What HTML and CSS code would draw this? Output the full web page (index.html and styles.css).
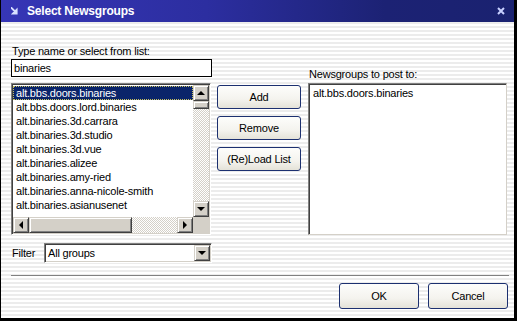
FILE: index.html
```html
<!DOCTYPE html>
<html lang="en">
<head>
    <meta charset="UTF-8">
    <title>Select Newsgroups</title>
    <link rel="stylesheet" href="styles.css">
</head>
<body>
    <div class="window">
        <div class="titlebar">
            <svg class="title-icon" width="8" height="8" viewBox="0 0 8 8">
                <path d="M0 0 L6 6 M0 1 L5 6 M6 2 L6 7 L1 7 Z" stroke="#d8e0ff" stroke-width="1.2" fill="#d8e0ff"/>
            </svg>
            <span class="title-text">Select Newsgroups</span>
            <svg class="close" width="8" height="8" viewBox="0 0 8 8">
                <path d="M1 1 L7 7 M7 1 L1 7" stroke="#c8d0ff" stroke-width="2"/>
            </svg>
        </div>

        <div class="content">
            <div class="main">
                <div class="col-left">
                    <div class="label">Type name or select from list:</div>
                    <div class="textbox">binaries</div>

                    <div class="listbox">
                        <div class="items">
                            <div class="item selected">alt.bbs.doors.binaries</div>
                            <div class="item">alt.bbs.doors.lord.binaries</div>
                            <div class="item">alt.binaries.3d.carrara</div>
                            <div class="item">alt.binaries.3d.studio</div>
                            <div class="item">alt.binaries.3d.vue</div>
                            <div class="item">alt.binaries.alizee</div>
                            <div class="item">alt.binaries.amy-ried</div>
                            <div class="item">alt.binaries.anna-nicole-smith</div>
                            <div class="item">alt.binaries.asianusenet</div>
                        </div>
                        <div class="vscroll">
                            <div class="sb-btn"><span class="arrow up"></span></div>
                            <div class="sb-thumb v"></div>
                            <div class="sb-track"></div>
                            <div class="sb-btn"><span class="arrow down"></span></div>
                        </div>
                        <div class="hscroll">
                            <div class="sb-btn"><span class="arrow left"></span></div>
                            <div class="sb-thumb h"></div>
                            <div class="sb-track"></div>
                            <div class="sb-btn"><span class="arrow right"></span></div>
                        </div>
                        <div class="corner"></div>
                    </div>

                    <div class="filter-row">
                        <span class="filter-label">Filter</span>
                        <div class="combo">
                            <span class="combo-value">All groups</span>
                            <div class="sb-btn"><span class="arrow down"></span></div>
                        </div>
                    </div>
                </div>

                <div class="col-mid">
                    <button class="btn">Add</button>
                    <button class="btn">Remove</button>
                    <button class="btn">(Re)Load List</button>
                </div>

                <div class="col-right">
                    <div class="label">Newsgroups to post to:</div>
                    <div class="postbox">
                        <div class="post-item">alt.bbs.doors.binaries</div>
                    </div>
                </div>
            </div>

            <div class="separator"></div>

            <div class="footer">
                <button class="btn btn-wide">OK</button>
                <button class="btn btn-wide">Cancel</button>
            </div>
        </div>
    </div>
</body>
</html>
```

FILE: styles.css
```css
body {
    margin: 0;
    padding: 0;
    font-family: "Liberation Sans", Arial, sans-serif;
    font-size: 11px;
    letter-spacing: -0.2px;
    color: #000;
    background: #000;
}
.window {
    box-sizing: border-box;
    width: 517px;
    height: 321px;
    border-left: 1px solid #000;
    border-right: 3px solid #000;
    border-bottom: 3px solid #000;
    background: repeating-linear-gradient(to bottom, #fff 0, #fff 2px, #ececec 2px, #ececec 4px);
    display: flex;
    flex-direction: column;
}
.titlebar {
    height: 22px;
    flex: none;
    display: flex;
    align-items: center;
    background: linear-gradient(to right, #3636b6 0%, #2c2ea0 40%, #1c2274 75%, #1a2270 100%);
    color: #fff;
}
.title-icon {
    margin-left: 10px;
    margin-right: 8px;
}
.title-text {
    font-weight: bold;
    font-size: 12px;
    letter-spacing: -0.2px;
    transform: scaleY(1.1);
}
.close {
    margin-left: auto;
    margin-right: 9px;
}
.content {
    flex: 1;
    display: flex;
    flex-direction: column;
    padding: 22px 0 0 10px;
}
.main {
    display: flex;
    align-items: flex-start;
}
.label {
    height: 14px;
    line-height: 14px;
    padding-left: 1px;
}
.col-left {
    width: 201px;
    display: flex;
    flex-direction: column;
}
.col-left .label {
    margin-bottom: 1px;
}
.textbox {
    box-sizing: border-box;
    height: 18px;
    border: 1px solid #000;
    background: #fff;
    padding-left: 2px;
    line-height: 16px;
}
.listbox {
    box-sizing: border-box;
    margin-top: 6px;
    height: 152px;
    width: 200px;
    border: 1px solid;
    border-color: #808080 #fff #fff #808080;
    box-shadow: inset 1px 1px 0 #404040, inset -1px -1px 0 #d4d0c8;
    padding: 1px;
    background: #fff;
    display: grid;
    grid-template-columns: 1fr 16px;
    grid-template-rows: 1fr 16px;
}
.items {
    overflow: hidden;
    padding-top: 1px;
}
.item {
    height: 14px;
    line-height: 14px;
    padding-left: 3px;
    white-space: nowrap;
}
.item.selected {
    background: #0a246a;
    color: #fff;
    outline: 1px dotted #c8c060;
    outline-offset: -1px;
}
.vscroll {
    display: flex;
    flex-direction: column;
}
.hscroll {
    display: flex;
}
.sb-btn {
    box-sizing: border-box;
    width: 16px;
    height: 16px;
    flex: none;
    background: #d4d0c8;
    border: 1px solid;
    border-color: #d4d0c8 #404040 #404040 #d4d0c8;
    box-shadow: inset 1px 1px 0 #fff, inset -1px -1px 0 #808080;
    display: flex;
    align-items: center;
    justify-content: center;
}
.sb-thumb {
    box-sizing: border-box;
    flex: none;
    background: #d4d0c8;
    border: 1px solid;
    border-color: #d4d0c8 #404040 #404040 #d4d0c8;
    box-shadow: inset 1px 1px 0 #fff, inset -1px -1px 0 #808080;
}
.sb-thumb.v {
    height: 8px;
}
.sb-thumb.h {
    width: 103px;
}
.sb-track {
    flex: 1;
    background: repeating-conic-gradient(#d4d0c8 0 25%, #fff 0 50%) 0 0 / 2px 2px;
}
.corner {
    background: #d4d0c8;
}
.arrow {
    width: 0;
    height: 0;
    border: 4px solid transparent;
}
.arrow.up {
    border-bottom-color: #000;
    border-top-width: 0;
}
.arrow.down {
    border-top-color: #000;
    border-bottom-width: 0;
}
.arrow.left {
    border-right-color: #000;
    border-left-width: 0;
}
.arrow.right {
    border-left-color: #000;
    border-right-width: 0;
}
.filter-row {
    margin-top: 8px;
    display: flex;
    align-items: center;
}
.filter-label {
    width: 32px;
    padding-left: 1px;
}
.combo {
    box-sizing: border-box;
    width: 168px;
    height: 20px;
    border: 1px solid;
    border-color: #808080 #fff #fff #808080;
    box-shadow: inset 1px 1px 0 #404040, inset -1px -1px 0 #d4d0c8;
    padding: 1px;
    background: #fff;
    display: flex;
    align-items: center;
}
.combo-value {
    flex: 1;
    padding-left: 2px;
}
.col-mid {
    margin-left: 5px;
    padding-top: 41px;
    display: flex;
    flex-direction: column;
    gap: 7px;
}
.btn {
    box-sizing: border-box;
    width: 84px;
    height: 24px;
    border: 1px solid #1c3070;
    border-radius: 3px;
    background: linear-gradient(to bottom, #fdfdfb 0%, #f4f3ee 60%, #e4e2d8 100%);
    font-family: "Liberation Sans", Arial, sans-serif;
    font-size: 11px;
    letter-spacing: -0.2px;
    color: #000;
    padding: 0;
}
.col-right {
    margin-left: 7px;
    padding-top: 23px;
    width: 199px;
}
.col-right .label {
    margin-bottom: 2px;
}
.postbox {
    box-sizing: border-box;
    height: 152px;
    border: 1px solid;
    border-color: #808080 #d4d0c8 #d4d0c8 #808080;
    box-shadow: inset 1px 1px 0 #404040;
    background: #fff;
    padding: 3px 0 0 4px;
}
.separator {
    margin-top: 12px;
    width: 498px;
    height: 1px;
    background: #808080;
    border-bottom: 1px solid #fff;
}
.footer {
    display: flex;
    justify-content: flex-end;
    gap: 9px;
    width: 497px;
    margin-top: 6px;
}
.btn-wide {
    width: 80px;
    height: 26px;
}
```
